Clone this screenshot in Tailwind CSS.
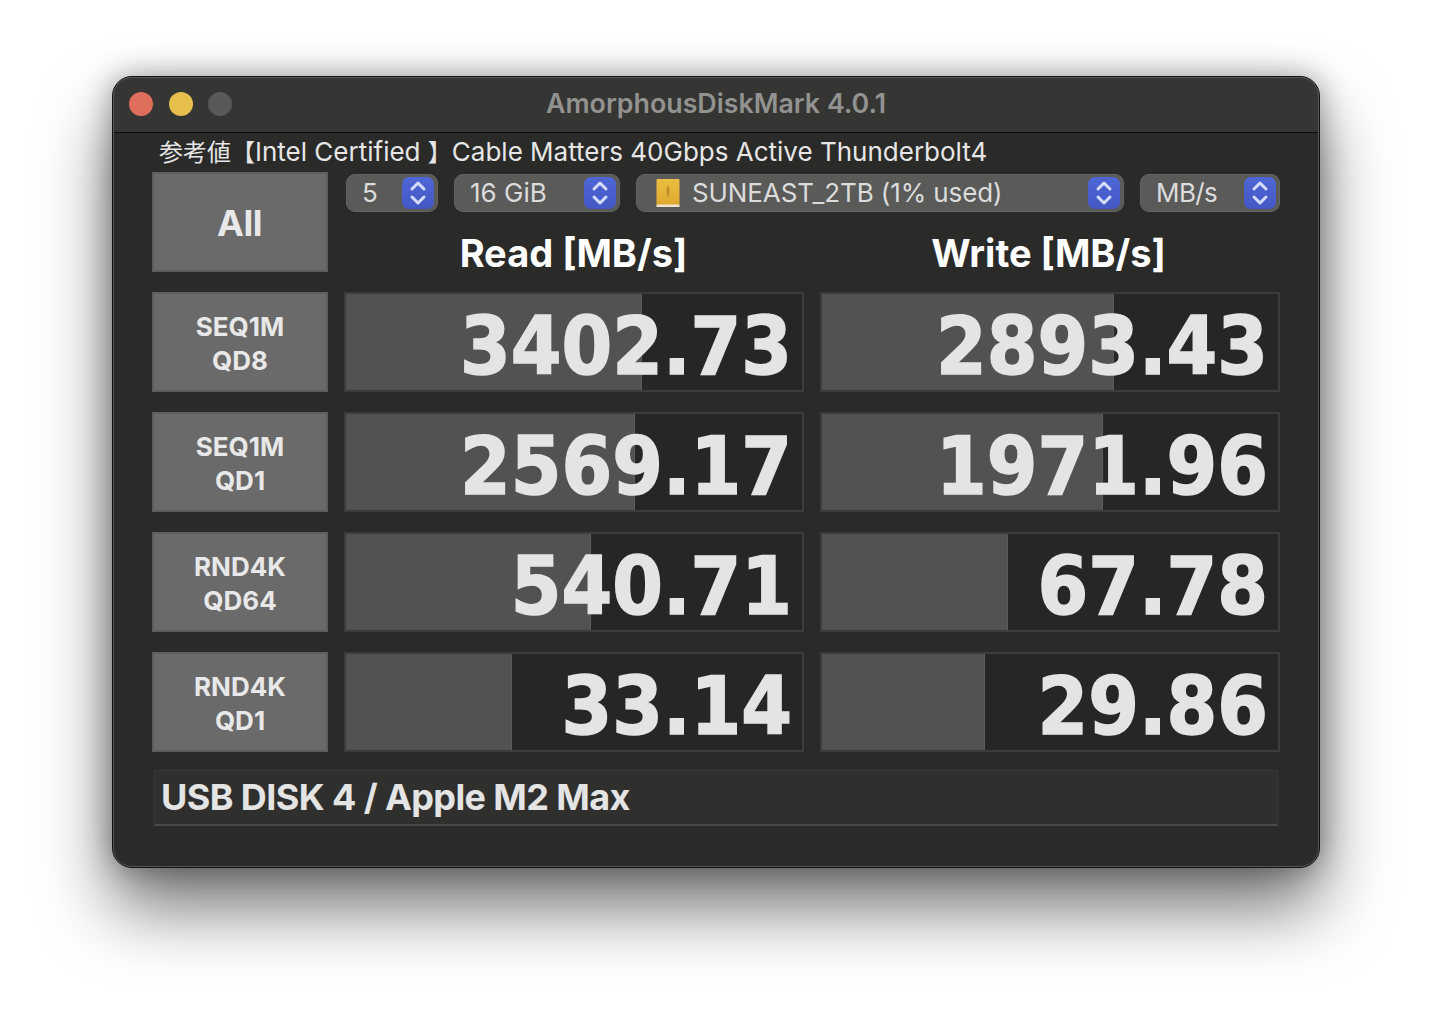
<!DOCTYPE html>
<html lang="ja">
<head>
    <meta charset="UTF-8">
    <title>AmorphousDiskMark</title>
    <script src="https://cdn.jsdelivr.net/npm/@tailwindcss/browser@4"></script>
</head>
<body class="bg-white h-[1016px] overflow-hidden pt-[76px] pl-[112px] font-['Inter','Noto_Sans_CJK_JP',sans-serif]">
    <div class="relative w-[1208px] h-[792px] rounded-[20px] bg-[#2a2a29] border border-[#111] shadow-[0_40px_70px_rgba(0,0,0,0.55),0_0_30px_rgba(0,0,0,0.35)]">
        <!-- title bar -->
        <div class="relative h-[56px] rounded-t-[19px] bg-[#353534] border-b border-[#0c0c0c] flex items-center justify-center">
            <div class="absolute left-[16px] top-[15px] flex gap-[15.5px]">
                <div class="w-[24px] h-[24px] rounded-full bg-[#df6f5c]"></div>
                <div class="w-[24px] h-[24px] rounded-full bg-[#e7bf4d]"></div>
                <div class="w-[24px] h-[24px] rounded-full bg-[#595958]"></div>
            </div>
            <span class="text-[26.8px] font-semibold text-[#929291] pb-[3px]">AmorphousDiskMark 4.0.1</span>
        </div>

        <div class="pl-[39px] pr-[39px]">
            <div class="h-[38px] pl-[7px] flex items-center text-[26px] leading-none text-[#e6e6e6] whitespace-nowrap">
                <div><span class="text-[24px]">参考値【</span>Intel Certified <span class="text-[24px]">】</span>Cable Matters 40Gbps Active Thunderbolt4</div>
            </div>

            <!-- top row -->
            <div class="flex gap-[16px] h-[100px] mt-[1px]">
                <button class="w-[176px] h-[100px] shrink-0 bg-[#6a6a6a] border-2 border-[#5e5e5e] pt-[2px] pr-[1px] text-[36px] tracking-[-0.5px] font-bold text-[#e8e8e8]">All</button>
                <div class="flex-1">
                    <div class="flex gap-[16px] pt-[2px] h-[40px]">
                        <div class="w-[92px] h-[38px] ml-[2px] rounded-[9px] bg-[#5a5a59] border border-[#636362] flex items-center justify-between pl-[15px] pr-[3px] text-[26px] text-[#dcdcdc]">
                            <span class="pb-[1px]">5</span>
                            <span class="w-[32px] h-[32px] rounded-[7px] bg-linear-to-b from-[#4f66d6] to-[#4458c4] flex items-center justify-center">
                                <svg width="18" height="26" viewBox="0 0 18 26" fill="none" stroke="#d5dcfa" stroke-width="3" stroke-linecap="round" stroke-linejoin="round"><path d="M3 9l6-6 6 6M3 17l6 6 6-6"/></svg>
                            </span>
                        </div>
                        <div class="w-[166px] h-[38px] rounded-[9px] bg-[#5a5a59] border border-[#636362] flex items-center justify-between pl-[15px] pr-[3px] text-[26px] text-[#dcdcdc]">
                            <span class="pb-[1px]">16 GiB</span>
                            <span class="w-[32px] h-[32px] rounded-[7px] bg-linear-to-b from-[#4f66d6] to-[#4458c4] flex items-center justify-center">
                                <svg width="18" height="26" viewBox="0 0 18 26" fill="none" stroke="#d5dcfa" stroke-width="3" stroke-linecap="round" stroke-linejoin="round"><path d="M3 9l6-6 6 6M3 17l6 6 6-6"/></svg>
                            </span>
                        </div>
                        <div class="w-[488px] h-[38px] rounded-[9px] bg-[#5a5a59] border border-[#636362] flex items-center justify-between pl-[19px] pr-[3px] text-[26px] text-[#dcdcdc]">
                            <span class="flex items-center gap-[12px] pb-[1px] tracking-[-0.1px]">
                                <svg width="24" height="28" viewBox="0 0 24 28"><defs><linearGradient id="disk" x1="0" y1="0" x2="0" y2="1"><stop offset="0" stop-color="#eabf42"/><stop offset="1" stop-color="#dea72e"/></linearGradient></defs><rect x="0.5" y="0" width="23" height="27" rx="1" fill="url(#disk)"/><rect x="0.5" y="25.5" width="23" height="2.5" fill="#eee6cc"/><path d="M12 6c1.5 3 1.5 4 1.5 6s-.5 4-1.5 7c-1-3-1.500-5-1.500-7s0-3 1.500-6z" fill="#c08f26"/></svg>
                                SUNEAST_2TB (1% used)
                            </span>
                            <span class="w-[32px] h-[32px] rounded-[7px] bg-linear-to-b from-[#4f66d6] to-[#4458c4] flex items-center justify-center">
                                <svg width="18" height="26" viewBox="0 0 18 26" fill="none" stroke="#d5dcfa" stroke-width="3" stroke-linecap="round" stroke-linejoin="round"><path d="M3 9l6-6 6 6M3 17l6 6 6-6"/></svg>
                            </span>
                        </div>
                        <div class="w-[140px] h-[38px] rounded-[9px] bg-[#5a5a59] border border-[#636362] flex items-center justify-between pl-[15px] pr-[3px] text-[26px] text-[#dcdcdc]">
                            <span class="pb-[1px] tracking-[-0.6px]">MB/s</span>
                            <span class="w-[32px] h-[32px] rounded-[7px] bg-linear-to-b from-[#4f66d6] to-[#4458c4] flex items-center justify-center">
                                <svg width="18" height="26" viewBox="0 0 18 26" fill="none" stroke="#d5dcfa" stroke-width="3" stroke-linecap="round" stroke-linejoin="round"><path d="M3 9l6-6 6 6M3 17l6 6 6-6"/></svg>
                            </span>
                        </div>
                    </div>
                    <div class="grid grid-cols-2 gap-[16px] text-[38px] font-bold text-white text-center leading-none pt-[22px] pr-[2px]">
                        <div>Read [MB/s]</div>
                        <div>Write [MB/s]</div>
                    </div>
                </div>
            </div>

            <!-- results -->
            <div class="flex flex-col gap-[20px] mt-[20px]">
                <div class="flex gap-[16px] h-[100px]">
                    <button class="w-[176px] shrink-0 bg-[#6a6a6a] border-2 border-[#5e5e5e] pt-[4px] text-[26px] leading-[34px] font-bold text-[#e8e8e8]">SEQ1M<br>QD8</button>
                    <div class="relative flex-1 bg-[#262625] border-2 border-[#3c3c3b] flex items-center justify-end pr-[10px] pt-[8px]">
                        <div class="absolute left-0 top-0 bottom-0 w-[296px] bg-[#525251] border-r border-[#5c5c5b]"></div>
                        <span class="relative text-[81px] leading-[96px] font-bold text-[#e4e4e4] font-['DejaVu_Sans'] [font-stretch:condensed] [-webkit-text-stroke:1.5px_#e4e4e4]">3402.73</span>
                    </div>
                    <div class="relative flex-1 bg-[#262625] border-2 border-[#3c3c3b] flex items-center justify-end pr-[10px] pt-[8px]">
                        <div class="absolute left-0 top-0 bottom-0 w-[292px] bg-[#525251] border-r border-[#5c5c5b]"></div>
                        <span class="relative text-[81px] leading-[96px] font-bold text-[#e4e4e4] font-['DejaVu_Sans'] [font-stretch:condensed] [-webkit-text-stroke:1.5px_#e4e4e4]">2893.43</span>
                    </div>
                </div>
                <div class="flex gap-[16px] h-[100px]">
                    <button class="w-[176px] shrink-0 bg-[#6a6a6a] border-2 border-[#5e5e5e] pt-[4px] text-[26px] leading-[34px] font-bold text-[#e8e8e8]">SEQ1M<br>QD1</button>
                    <div class="relative flex-1 bg-[#262625] border-2 border-[#3c3c3b] flex items-center justify-end pr-[10px] pt-[8px]">
                        <div class="absolute left-0 top-0 bottom-0 w-[289px] bg-[#525251] border-r border-[#5c5c5b]"></div>
                        <span class="relative text-[81px] leading-[96px] font-bold text-[#e4e4e4] font-['DejaVu_Sans'] [font-stretch:condensed] [-webkit-text-stroke:1.5px_#e4e4e4]">2569.17</span>
                    </div>
                    <div class="relative flex-1 bg-[#262625] border-2 border-[#3c3c3b] flex items-center justify-end pr-[10px] pt-[8px]">
                        <div class="absolute left-0 top-0 bottom-0 w-[281px] bg-[#525251] border-r border-[#5c5c5b]"></div>
                        <span class="relative text-[81px] leading-[96px] font-bold text-[#e4e4e4] font-['DejaVu_Sans'] [font-stretch:condensed] [-webkit-text-stroke:1.5px_#e4e4e4]">1971.96</span>
                    </div>
                </div>
                <div class="flex gap-[16px] h-[100px]">
                    <button class="w-[176px] shrink-0 bg-[#6a6a6a] border-2 border-[#5e5e5e] pt-[4px] text-[26px] leading-[34px] font-bold text-[#e8e8e8]">RND4K<br>QD64</button>
                    <div class="relative flex-1 bg-[#262625] border-2 border-[#3c3c3b] flex items-center justify-end pr-[10px] pt-[8px]">
                        <div class="absolute left-0 top-0 bottom-0 w-[245px] bg-[#525251] border-r border-[#5c5c5b]"></div>
                        <span class="relative text-[81px] leading-[96px] font-bold text-[#e4e4e4] font-['DejaVu_Sans'] [font-stretch:condensed] [-webkit-text-stroke:1.5px_#e4e4e4]">540.71</span>
                    </div>
                    <div class="relative flex-1 bg-[#262625] border-2 border-[#3c3c3b] flex items-center justify-end pr-[10px] pt-[8px]">
                        <div class="absolute left-0 top-0 bottom-0 w-[186px] bg-[#525251] border-r border-[#5c5c5b]"></div>
                        <span class="relative text-[81px] leading-[96px] font-bold text-[#e4e4e4] font-['DejaVu_Sans'] [font-stretch:condensed] [-webkit-text-stroke:1.5px_#e4e4e4]">67.78</span>
                    </div>
                </div>
                <div class="flex gap-[16px] h-[100px]">
                    <button class="w-[176px] shrink-0 bg-[#6a6a6a] border-2 border-[#5e5e5e] pt-[4px] text-[26px] leading-[34px] font-bold text-[#e8e8e8]">RND4K<br>QD1</button>
                    <div class="relative flex-1 bg-[#262625] border-2 border-[#3c3c3b] flex items-center justify-end pr-[10px] pt-[8px]">
                        <div class="absolute left-0 top-0 bottom-0 w-[166px] bg-[#525251] border-r border-[#5c5c5b]"></div>
                        <span class="relative text-[81px] leading-[96px] font-bold text-[#e4e4e4] font-['DejaVu_Sans'] [font-stretch:condensed] [-webkit-text-stroke:1.5px_#e4e4e4]">33.14</span>
                    </div>
                    <div class="relative flex-1 bg-[#262625] border-2 border-[#3c3c3b] flex items-center justify-end pr-[10px] pt-[8px]">
                        <div class="absolute left-0 top-0 bottom-0 w-[163px] bg-[#525251] border-r border-[#5c5c5b]"></div>
                        <span class="relative text-[81px] leading-[96px] font-bold text-[#e4e4e4] font-['DejaVu_Sans'] [font-stretch:condensed] [-webkit-text-stroke:1.5px_#e4e4e4]">29.86</span>
                    </div>
                </div>
            </div>

            <!-- footer comment -->
            <div class="mt-[18px] mx-[2px] h-[56px] bg-[#2f2f2e] border border-[#3a3a39] border-b-2 border-b-[#484847] flex items-center pl-[6px] pb-[2px] text-[36px] tracking-[-0.6px] font-bold text-[#e4e4e4] whitespace-nowrap">USB DISK 4 / Apple M2 Max</div>
        </div>

        <!-- window edge highlight -->
        <div class="absolute inset-0 rounded-[19px] border border-[#6a6a6a]/70 pointer-events-none"></div>
    </div>
</body>
</html>
